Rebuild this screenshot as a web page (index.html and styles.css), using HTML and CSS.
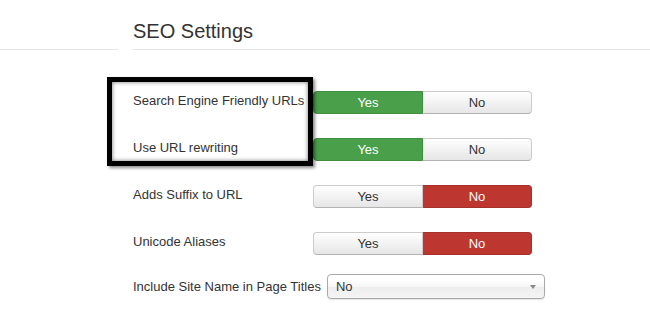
FILE: index.html
```html
<!DOCTYPE html>
<html>
<head>
<meta charset="utf-8">
<link rel="stylesheet" href="styles.css">
</head>
<body>
<div class="page">
  <div class="sidebar"><div class="sidebar-head"></div></div>
  <div class="main">
    <h2 class="legend">SEO Settings</h2>
    <div class="form">
      <div class="row">
        <label class="label">Search Engine Friendly URLs</label>
        <div class="group">
          <span class="btn btn-left yes-on">Yes</span><span class="btn btn-right">No</span>
        </div>
      </div>
      <div class="row">
        <label class="label">Use URL rewriting</label>
        <div class="group">
          <span class="btn btn-left yes-on">Yes</span><span class="btn btn-right">No</span>
        </div>
      </div>
      <div class="row">
        <label class="label">Adds Suffix to URL</label>
        <div class="group">
          <span class="btn btn-left">Yes</span><span class="btn btn-right no-on">No</span>
        </div>
      </div>
      <div class="row">
        <label class="label">Unicode Aliases</label>
        <div class="group">
          <span class="btn btn-left">Yes</span><span class="btn btn-right no-on">No</span>
        </div>
      </div>
      <div class="row row-select">
        <label class="label label-select">Include Site Name in Page Titles</label>
        <div class="select">
          <span class="select-value">No</span>
          <span class="caret"></span>
        </div>
      </div>
    </div>
  </div>
  <div class="highlight"></div>
</div>
</body>
</html>
```
FILE: styles.css
```css
html, body {
  margin: 0;
  padding: 0;
  background: #fff;
}
body {
  font-family: "Liberation Sans", Arial, sans-serif;
  font-size: 13px;
  color: #333;
  width: 650px;
  height: 316px;
  overflow: hidden;
}
.page {
  position: relative;
  display: grid;
  grid-template-columns: 118px 1fr;
  column-gap: 15px;
}
.sidebar-head {
  height: 49px;
  border-bottom: 1px solid #e5e5e5;
}
.legend {
  margin: 0;
  padding-top: 13px;
  font-size: 20px;
  font-weight: normal;
  line-height: 36px;
  color: #333;
  border-bottom: 1px solid #e5e5e5;
  height: 36px;
}
.form {
  padding-top: 41px;
}
.row {
  display: flex;
  align-items: flex-start;
  gap: 6px;
  margin-bottom: 24px;
}
.row-select {
  margin-top: -5px;
}
.label {
  min-width: 174px;
  line-height: 18px;
  padding-top: 1px;
  white-space: nowrap;
}
.label-select {
  min-width: 0;
  padding-top: 4px;
}
.group {
  display: flex;
}
.btn {
  box-sizing: border-box;
  height: 23px;
  line-height: 22px;
  text-align: center;
  font-size: 13px;
  color: #333;
  background: linear-gradient(#ffffff, #e6e6e6);
  border: 1px solid #cccccc;
  border-bottom-color: #b3b3b3;
}
.btn-left {
  width: 110px;
  border-radius: 4px 0 0 4px;
}
.btn-right {
  width: 109px;
  border-left: none;
  border-radius: 0 4px 4px 0;
}
.yes-on {
  background: #4a9f4a;
  border-color: #3f8f3f;
  color: #fff;
}
.no-on {
  background: #bd362f;
  border-color: #a52f29;
  color: #fff;
}
.select {
  box-sizing: border-box;
  width: 218px;
  height: 25px;
  display: flex;
  align-items: center;
  justify-content: space-between;
  padding: 0 8px 0 8px;
  border: 1px solid #aaaaaa;
  border-radius: 4px;
  background: linear-gradient(#ffffff 20%, #f6f6f6 50%, #eeeeee 52%, #f4f4f4 100%);
  box-shadow: 0 1px 1px rgba(0, 0, 0, 0.1);
  line-height: 18px;
  color: #333;
}
.caret {
  width: 0;
  height: 0;
  border-left: 3px solid transparent;
  border-right: 3px solid transparent;
  border-top: 4px solid #888;
  margin-top: 1px;
}
.highlight {
  position: absolute;
  left: 107px;
  top: 77px;
  width: 206px;
  height: 89px;
  box-sizing: border-box;
  border: 5px solid #000;
  box-shadow: inset 0 0 4px rgba(0, 0, 0, 0.55), 2px 2px 3px rgba(0, 0, 0, 0.45);
}
```
